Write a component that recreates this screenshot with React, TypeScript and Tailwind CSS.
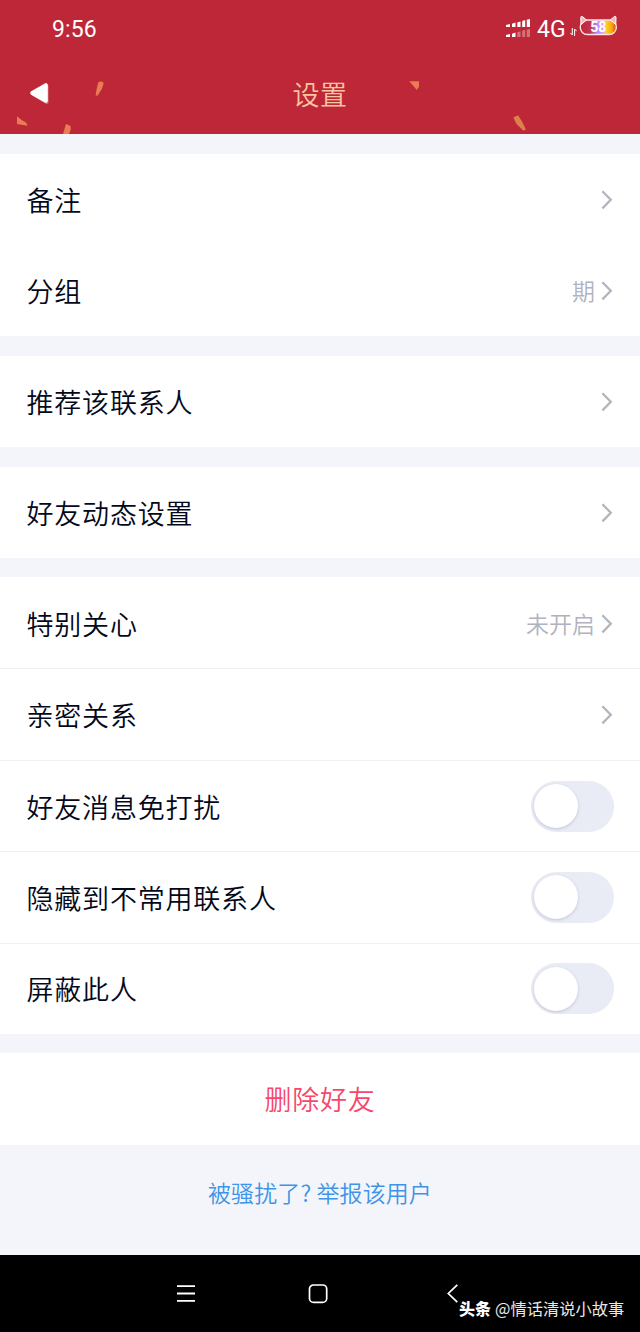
import { useState } from 'react';
import clsx from 'clsx';

interface RowItem {
  label: string;
  value?: string;
  toggle?: boolean;
}

interface Group {
  className: string;
  divided?: boolean;
  rows: RowItem[];
}

const groups: Group[] = [
  { className: 'mt-5 h-[182px]', rows: [{ label: '备注' }, { label: '分组', value: '期' }] },
  { className: 'mt-5 h-[91px]', rows: [{ label: '推荐该联系人' }] },
  { className: 'mt-5 h-[91px]', rows: [{ label: '好友动态设置' }] },
  {
    className: 'mt-[19px] h-[457px]',
    divided: true,
    rows: [
      { label: '特别关心', value: '未开启' },
      { label: '亲密关系' },
      { label: '好友消息免打扰', toggle: true },
      { label: '隐藏到不常用联系人', toggle: true },
      { label: '屏蔽此人', toggle: true },
    ],
  },
];

function SignalBars() {
  return (
    <svg className="mt-[19px] h-[19px] w-[25px]" viewBox="0 0 25 19" fill="#fff">
      <path d="M0 6 4 5V8H0zM6 4.8 9.5 3.6V8H6zM11.3 3.5 14.5 2.5V8h-3.2zM16.2 2 19.2 1V8h-3zM20.8 .8 24 0v8h-3.2z" />
      <path d="M0 16 4 15V18H0zM6 14.8 9.5 13.6V18H6z" />
      <path d="M11.3 13.2 14.5 12.2V18h-3.2zM16.2 11.8 19.2 10.8V18h-3zM20.8 10.8 24 10v8h-3.2z" opacity=".35" />
    </svg>
  );
}

function Battery() {
  return (
    <svg className="ml-[2px] mt-[15px] h-[22px] w-[39px]" viewBox="0 0 39 22">
      <defs>
        <linearGradient id="charge">
          <stop offset="0" stopColor="#be2737" />
          <stop offset=".28" stopColor="#c2324f" />
          <stop offset=".46" stopColor="#b58cff" />
          <stop offset=".58" stopColor="#c39bfa" />
          <stop offset=".69" stopColor="#f0b6d0" />
          <stop offset=".73" stopColor="#ffcf19" />
          <stop offset=".88" stopColor="#f9a50b" />
          <stop offset="1" stopColor="#d8391d" />
        </linearGradient>
      </defs>
      <rect x="1.3" y="5" width="36" height="14.5" rx="7" fill="url(#charge)" stroke="#ffe3e5" strokeWidth="1.4" />
      <path d="M2 9.5 1.8 2.3q.2-1.5 1.5-.8L7.5 5zM36.8 9.5 37 2.3q-.2-1.5-1.5-.8L31.3 5z" fill="#f3b5bc" stroke="#fff" strokeWidth="1" />
      <text x="19.3" y="17" textAnchor="middle" fontFamily="Roboto, sans-serif" fontSize="14" fontWeight="700" fill="#fff">
        58
      </text>
    </svg>
  );
}

function StatusBar() {
  return (
    <div className="flex h-[54px] items-start pl-[52px] pr-[22px] text-white">
      <span className="mt-[14px] font-[Roboto,sans-serif] text-[23px] leading-8 tracking-[0.1px]">9:56</span>
      <div className="ml-auto flex items-start">
        <SignalBars />
        <span className="ml-[6px] mt-[14px] w-[31px] font-[Roboto,sans-serif] text-[23px] leading-8">4G</span>
        <svg className="ml-[2px] mt-[28px] h-2 w-[7px]" viewBox="0 0 7 8" fill="none" stroke="#fff" strokeWidth="1">
          <path d="M2.3 0v7L.4 4.8M4.6 8V1l2 2.2" />
        </svg>
        <Battery />
      </div>
    </div>
  );
}

function Header() {
  return (
    <header className="relative h-[134px] shrink-0 overflow-hidden bg-[#be2737]">
      <StatusBar />
      {/* confetti */}
      <svg className="absolute inset-0 h-full w-full" viewBox="0 0 640 134" fill="#e97c53">
        <path d="M98.3 82.5Q100.5 80.3 103.5 82.5 103.8 85 101.8 89L97.5 95.8 95.5 95.3 97.3 86z" />
        <path d="M17 116.3 22 120.3 26 122.5 27.5 125.8 17 124z" />
        <path d="M66 124 70.5 126 70.8 129.5 69 134H63z" />
        <path d="M409.3 81.3H419V86.5L416.8 90z" />
        <path d="M513.3 117.5 518 115.3 522 121.5 525.8 129.5 523.5 130.8 516.5 124z" fill="#dd8049" />
      </svg>
      <div className="relative flex h-20 items-center justify-center">
        <button aria-label="返回" className="absolute left-[28px] top-[28px]">
          <svg className="h-[23px] w-[22px]" viewBox="0 0 22 23">
            <path d="M4.5 11.8 18.8 4.2V20.2z" fill="#d9707c" stroke="#d9707c" strokeWidth="3.5" strokeLinejoin="round" />
            <path d="M4.2 11 17.8 3.2V18.8z" fill="#fff" stroke="#fff" strokeWidth="4" strokeLinejoin="round" />
          </svg>
        </button>
        <h1 className="text-[27px] font-[350] tracking-[0.6px] text-[#f8c6a0]">设置</h1>
      </div>
    </header>
  );
}

function Chevron() {
  return (
    <svg className="ml-[6px] h-5 w-[13px]" viewBox="0 0 13 20" fill="none" stroke="#b2b4be" strokeWidth="2.3">
      <path d="M1.4 1.2 9.8 9.8 1.4 18.4" />
    </svg>
  );
}

function Toggle({ label }: { label: string }) {
  const [on, setOn] = useState(false);

  return (
    <button
      role="switch"
      aria-checked={on}
      aria-label={label}
      onClick={() => setOn(!on)}
      className={clsx(
        'mb-px flex h-[51px] w-[83px] items-center rounded-full px-[3px] transition-colors',
        on ? 'justify-end bg-[#12b7f5]' : 'bg-[#e9ebf5]',
      )}
    >
      <span className="size-11 rounded-full bg-white shadow-[0_1px_3px_rgba(120,124,160,0.35)]" />
    </button>
  );
}

function Row({ label, value, toggle, divided }: RowItem & { divided?: boolean }) {
  return (
    <div
      className={clsx(
        'flex min-h-0 flex-1 items-center px-[26px]',
        divided && 'border-t border-[#f0f0f4] pt-px first:border-transparent',
      )}
    >
      <span className="pl-[0.5px] text-[27px] font-[350] leading-10 tracking-[0.8px] text-[#03081a]">{label}</span>
      <div className="ml-auto flex items-center">
        {value && <span className="pb-[2px] text-[23px] font-[350] leading-8 text-[#b0b3bf]">{value}</span>}
        {toggle ? <Toggle label={label} /> : <Chevron />}
      </div>
    </div>
  );
}

function NavBar() {
  return (
    <nav className="relative h-[77px] shrink-0 bg-black text-white">
      <div className="flex h-full items-center pl-[177px]">
        <svg className="h-[17px] w-[18px]" viewBox="0 0 18 17" stroke="#fff" strokeWidth="1.8">
          <path d="M0 1.2h18M0 8.5h18M0 15.8h18" />
        </svg>
        <svg className="ml-[113px] h-5 w-5" viewBox="0 0 20 20" fill="none" stroke="#fff" strokeWidth="1.7">
          <rect x="1.5" y="1" width="17.2" height="17.4" rx="4" />
        </svg>
        <svg className="ml-[119px] h-[19px] w-3" viewBox="0 0 12 19" fill="none" stroke="#fff" strokeWidth="1.7">
          <path d="M10.3.8 1.3 9.5l9 8.7" />
        </svg>
      </div>
      {/* watermark */}
      <div className="absolute left-[459px] top-[41px] flex items-center whitespace-nowrap leading-6">
        <span className="text-[16px] font-black">头条</span>
        <span className="ml-1 text-[16.3px] text-[#e8e8e8]">@情话清说小故事</span>
      </div>
    </nav>
  );
}

export default function App() {
  return (
    <div className="flex h-[1332px] w-[640px] flex-col overflow-hidden bg-[#f4f5fa] font-['Noto_Sans_CJK_SC',sans-serif]">
      <Header />
      {groups.map((group) => (
        <section key={group.rows[0].label} className={clsx('flex shrink-0 flex-col bg-white', group.className)}>
          {group.rows.map((row) => (
            <Row key={row.label} {...row} divided={group.divided} />
          ))}
        </section>
      ))}
      <button className="mt-[19px] h-[92px] shrink-0 bg-white text-[27px] font-[350] tracking-[0.7px] text-[#f5486b]">
        删除好友
      </button>
      <div className="flex h-[110px] shrink-0 items-center justify-center pb-[15px]">
        <a href="#report" className="text-[23px] font-[350] tracking-[0.1px] text-[#3d94e8]">
          被骚扰了? 举报该用户
        </a>
      </div>
      <NavBar />
    </div>
  );
}
